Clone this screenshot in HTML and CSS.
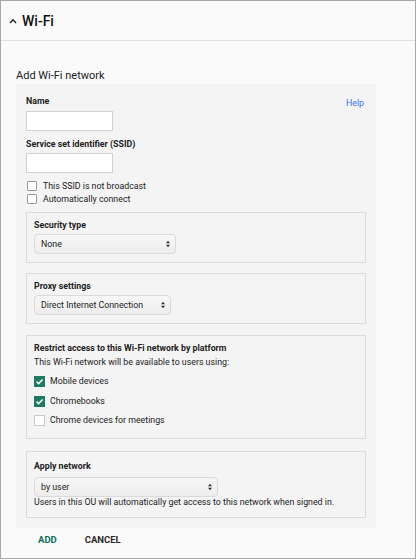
FILE: index.html
```html
<!DOCTYPE html>
<html>
<head>
<meta charset="utf-8">
<link rel="stylesheet" href="styles.css">
</head>
<body>
<div class="frame">
  <div class="header">
    <svg class="chev" width="8" height="6" viewBox="0 0 8 6"><path d="M1 5 L4 1.8 L7 5" fill="none" stroke="#222" stroke-width="1.4"/></svg>
    <span class="htitle">Wi-Fi</span>
  </div>
  <div class="content">
    <div class="title">Add Wi-Fi network</div>
    <div class="panel">
      <div class="namerow">
        <div class="label">Name</div>
        <a class="help">Help</a>
      </div>
      <div class="input"></div>
      <div class="label ssid">Service set identifier (SSID)</div>
      <div class="input in2"></div>
      <div class="cbrows">
        <label class="cb"><span class="box"></span>This SSID is not broadcast</label>
        <label class="cb"><span class="box"></span>Automatically connect</label>
      </div>

      <div class="group sec">
        <div class="label">Security type</div>
        <div class="select w142"><span>None</span><svg class="arr" width="4" height="8" viewBox="0 0 4 8"><path d="M0 3.2 L2 0.8 L4 3.2 Z M0 4.8 L2 7.2 L4 4.8 Z" fill="#333"/></svg></div>
      </div>

      <div class="group">
        <div class="label">Proxy settings</div>
        <div class="select w137"><span>Direct Internet Connection</span><svg class="arr" width="4" height="8" viewBox="0 0 4 8"><path d="M0 3.2 L2 0.8 L4 3.2 Z M0 4.8 L2 7.2 L4 4.8 Z" fill="#333"/></svg></div>
      </div>

      <div class="group restrict">
        <div class="label">Restrict access to this Wi-Fi network by platform</div>
        <div class="text avail">This Wi-Fi network will be available to users using:</div>
        <label class="pcb p1"><span class="pbox on"><svg width="9" height="9" viewBox="0 0 9 9"><path d="M1.6 4.6 L3.6 6.6 L7.6 2.4" fill="none" stroke="#fff" stroke-width="1.5"/></svg></span>Mobile devices</label>
        <label class="pcb p2"><span class="pbox on"><svg width="9" height="9" viewBox="0 0 9 9"><path d="M1.6 4.6 L3.6 6.6 L7.6 2.4" fill="none" stroke="#fff" stroke-width="1.5"/></svg></span>Chromebooks</label>
        <label class="pcb p3"><span class="pbox"></span>Chrome devices for meetings</label>
      </div>

      <div class="group apply">
        <div class="label">Apply network</div>
        <div class="select w184"><span>by user</span><svg class="arr" width="4" height="8" viewBox="0 0 4 8"><path d="M0 3.2 L2 0.8 L4 3.2 Z M0 4.8 L2 7.2 L4 4.8 Z" fill="#333"/></svg></div>
        <div class="text hint">Users in this OU will automatically get access to this network when signed in.</div>
      </div>
    </div>
    <div class="buttons">
      <span class="btn add">ADD</span>
      <span class="btn cancel">CANCEL</span>
    </div>
  </div>
</div>
</body>
</html>
```

FILE: styles.css
```css
html, body {
  margin: 0;
  padding: 0;
  background: #ffffff;
}
body {
  font-family: Roboto, "Liberation Sans", Arial, sans-serif;
  color: #222;
}
.frame {
  box-sizing: border-box;
  width: 416px;
  height: 559px;
  border: 1px solid #a8a8a8;
  background: #fafafa;
}
.header {
  box-sizing: border-box;
  height: 40px;
  border-bottom: 1px solid #e0e0e0;
  display: flex;
  align-items: center;
  padding-left: 8px;
  gap: 5px;
}
.chev {
  display: block;
  margin-top: 1px;
}
.htitle {
  font-size: 14px;
  font-weight: 500;
  color: #111;
  line-height: 18px;
  margin-top: 1px;
}
.content {
  padding: 0 0 0 15px;
}
.title {
  font-size: 11px;
  line-height: 14px;
  margin-top: 28px;
  height: 15px;
  color: #222;
}
.panel {
  width: 360px;
  box-sizing: border-box;
  background: #f4f4f4;
  padding: 12px 12px 10px 10px;
}
.label {
  font-size: 8.8px;
  font-weight: 700;
  line-height: 11px;
  color: #222;
}
.namerow {
  display: flex;
  justify-content: space-between;
  align-items: flex-start;
  height: 11px;
}
.help {
  font-size: 8.8px;
  line-height: 11px;
  color: #3d6ff0;
  margin-top: 2px;
}
.input {
  box-sizing: border-box;
  width: 87px;
  height: 20px;
  background: #fff;
  border: 1px solid #d2d2d2;
  margin-top: 4px;
}
.input.in2 {
  margin-top: 3px;
}
.ssid {
  margin-top: 8px;
}
.cbrows {
  margin-top: 8px;
  display: flex;
  flex-direction: column;
  gap: 3px;
}
.cb {
  display: flex;
  align-items: center;
  gap: 6px;
  font-size: 8.8px;
  line-height: 10px;
  height: 10px;
  color: #222;
  padding-left: 1px;
}
.box {
  box-sizing: border-box;
  width: 10px;
  height: 10px;
  border: 1px solid #9a9a9a;
  border-radius: 1px;
  background: #fff;
}
.group {
  box-sizing: border-box;
  width: 340px;
  border: 1px solid #dcdcdc;
  margin-top: 10px;
  padding: 7px 7px 8px 7px;
}
.group.sec {
  margin-top: 8px;
}
.group .label {
  margin-bottom: 3px;
}
.select {
  box-sizing: border-box;
  height: 20px;
  border: 1px solid #dadada;
  border-radius: 4px;
  background: linear-gradient(#f7f7f7, #ededed);
  display: flex;
  align-items: center;
  justify-content: space-between;
  padding: 0 5px 0 6px;
  font-size: 8.8px;
  color: #222;
}
.arr { display: block; }
.w142 { width: 142px; }
.w137 { width: 137px; }
.w184 { width: 184px; }
.text {
  font-size: 8.8px;
  line-height: 11px;
  color: #222;
}
.restrict {
  margin-top: 11px;
  padding-bottom: 12px;
}
.pcb {
  display: flex;
  align-items: center;
  gap: 5px;
  font-size: 8.8px;
  line-height: 11px;
  height: 11px;
  color: #222;
}
.p1 { margin-top: 8px; }
.p2 { margin-top: 9px; }
.p3 { margin-top: 8px; }
.pbox {
  box-sizing: border-box;
  width: 11px;
  height: 11px;
  border: 1px solid #c8c8c8;
  background: #fff;
  display: flex;
  align-items: center;
  justify-content: center;
}
.pbox.on {
  background: #1d7b63;
  border-color: #1d7b63;
}
.pbox svg { display: block; }
.apply {
  margin-top: 12px;
  padding-top: 9px;
  padding-bottom: 9px;
}
.apply .label {
  margin-bottom: 5px;
}
.buttons {
  display: flex;
  gap: 28px;
  padding-left: 22px;
  margin-top: 6px;
}
.btn {
  font-size: 9.5px;
  font-weight: 700;
  line-height: 12px;
}
.add { color: #0b6f5c; }
.cancel { color: #2a2a2a; }
```
